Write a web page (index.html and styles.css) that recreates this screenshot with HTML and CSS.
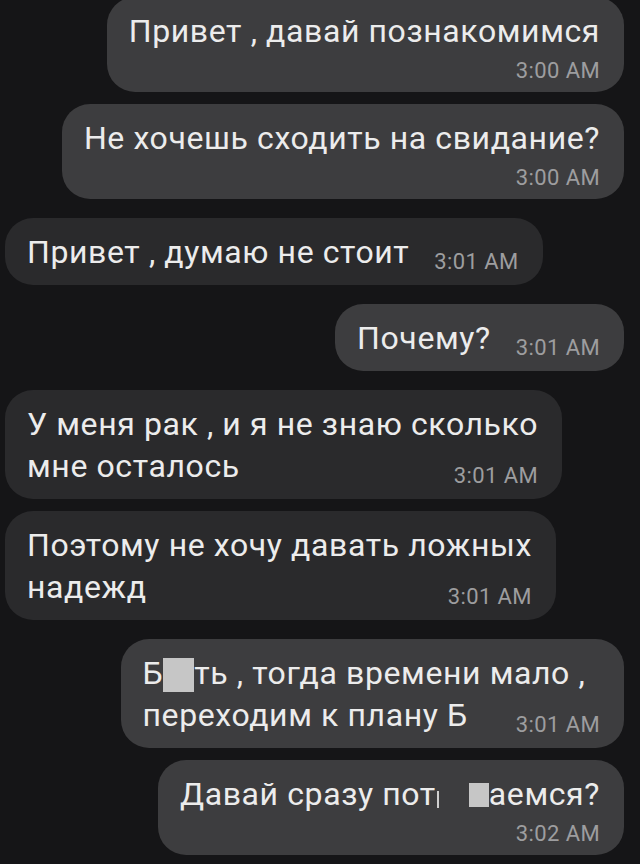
FILE: index.html
```html
<!DOCTYPE html>
<html lang="ru">

<head>
  <meta charset="UTF-8">
  <meta name="viewport" content="width=device-width, initial-scale=1.0">
  <title>Чат</title>
  <link rel="stylesheet" href="styles.css">
</head>

<body>
  <div class="chat">

    <div class="group out">
      <div class="bubble stack">
        <div class="text">Привет , давай познакомимся</div>
        <div class="meta"><span class="time">3:00 AM</span></div>
      </div>
      <div class="bubble stack">
        <div class="text">Не хочешь сходить на свидание?</div>
        <div class="meta"><span class="time">3:00 AM</span></div>
      </div>
    </div>

    <div class="group in">
      <div class="bubble">
        <div class="row"><span class="text">Привет , думаю не стоит</span><span class="time">3:01 AM</span></div>
      </div>
    </div>

    <div class="group out">
      <div class="bubble">
        <div class="row"><span class="text">Почему?</span><span class="time">3:01 AM</span></div>
      </div>
    </div>

    <div class="group in">
      <div class="bubble">
        <div class="text">У меня рак , и я не знаю сколько</div>
        <div class="row"><span class="text">мне осталось</span><span class="time">3:01 AM</span></div>
      </div>
      <div class="bubble">
        <div class="text">Поэтому не хочу давать ложных</div>
        <div class="row"><span class="text">надежд</span><span class="time">3:01 AM</span></div>
      </div>
    </div>

    <div class="group out">
      <div class="bubble">
        <div class="text">Б<span class="censor"></span>ть , тогда времени мало ,</div>
        <div class="row wide"><span class="text">переходим к плану Б</span><span class="time">3:01 AM</span></div>
      </div>
      <div class="bubble stack">
        <div class="text">Давай сразу пот<span class="stroke"></span><span class="erased"></span><span class="censor small"></span>аемся?</div>
        <div class="meta"><span class="time">3:02 AM</span></div>
      </div>
    </div>

  </div>
</body>

</html>
```

FILE: styles.css
```css
body {
  margin: 0;
  background: #151517;
  font-family: Roboto, "Noto Sans", Arial, sans-serif;
  color: #ececec;
}

.chat {
  display: flex;
  flex-direction: column;
  gap: 19px;
  padding: 0 16px 0 5px;
  margin-top: -3px;
}

.group {
  display: flex;
  flex-direction: column;
  gap: 12px;
}

.group.out {
  align-items: flex-end;
}

.group.in {
  align-items: flex-start;
}

.bubble {
  border-radius: 28px;
  padding: 13px 24px 12px 22px;
  font-size: 32px;
  letter-spacing: 0.6px;
  line-height: 42px;
  white-space: nowrap;
}

.out .bubble {
  background: #3d3d3f;
}

.in .bubble {
  background: #2a2a2c;
}

.bubble.stack {
  padding-bottom: 7px;
}

.row {
  display: flex;
  justify-content: space-between;
  gap: 25px;
}

.row.wide {
  gap: 48px;
}

.time {
  font-size: 22px;
  letter-spacing: 0.4px;
  line-height: 23px;
  color: #9d9d9f;
  align-self: flex-end;
}

.meta {
  margin-top: 5px;
  font-size: 22px;
  line-height: 28px;
  text-align: right;
}

.meta .time {
  line-height: 28px;
}

.censor {
  display: inline-block;
  width: 31px;
  height: 34px;
  background: #c6c6c6;
  vertical-align: -8px;
}

.censor.small {
  width: 20px;
  height: 24px;
  vertical-align: -2px;
}

.stroke {
  display: inline-block;
  width: 2px;
  height: 17px;
  background: #cfcfcf;
  margin-left: 1px;
  vertical-align: -3px;
}

.erased {
  display: inline-block;
  width: 30px;
}
```
